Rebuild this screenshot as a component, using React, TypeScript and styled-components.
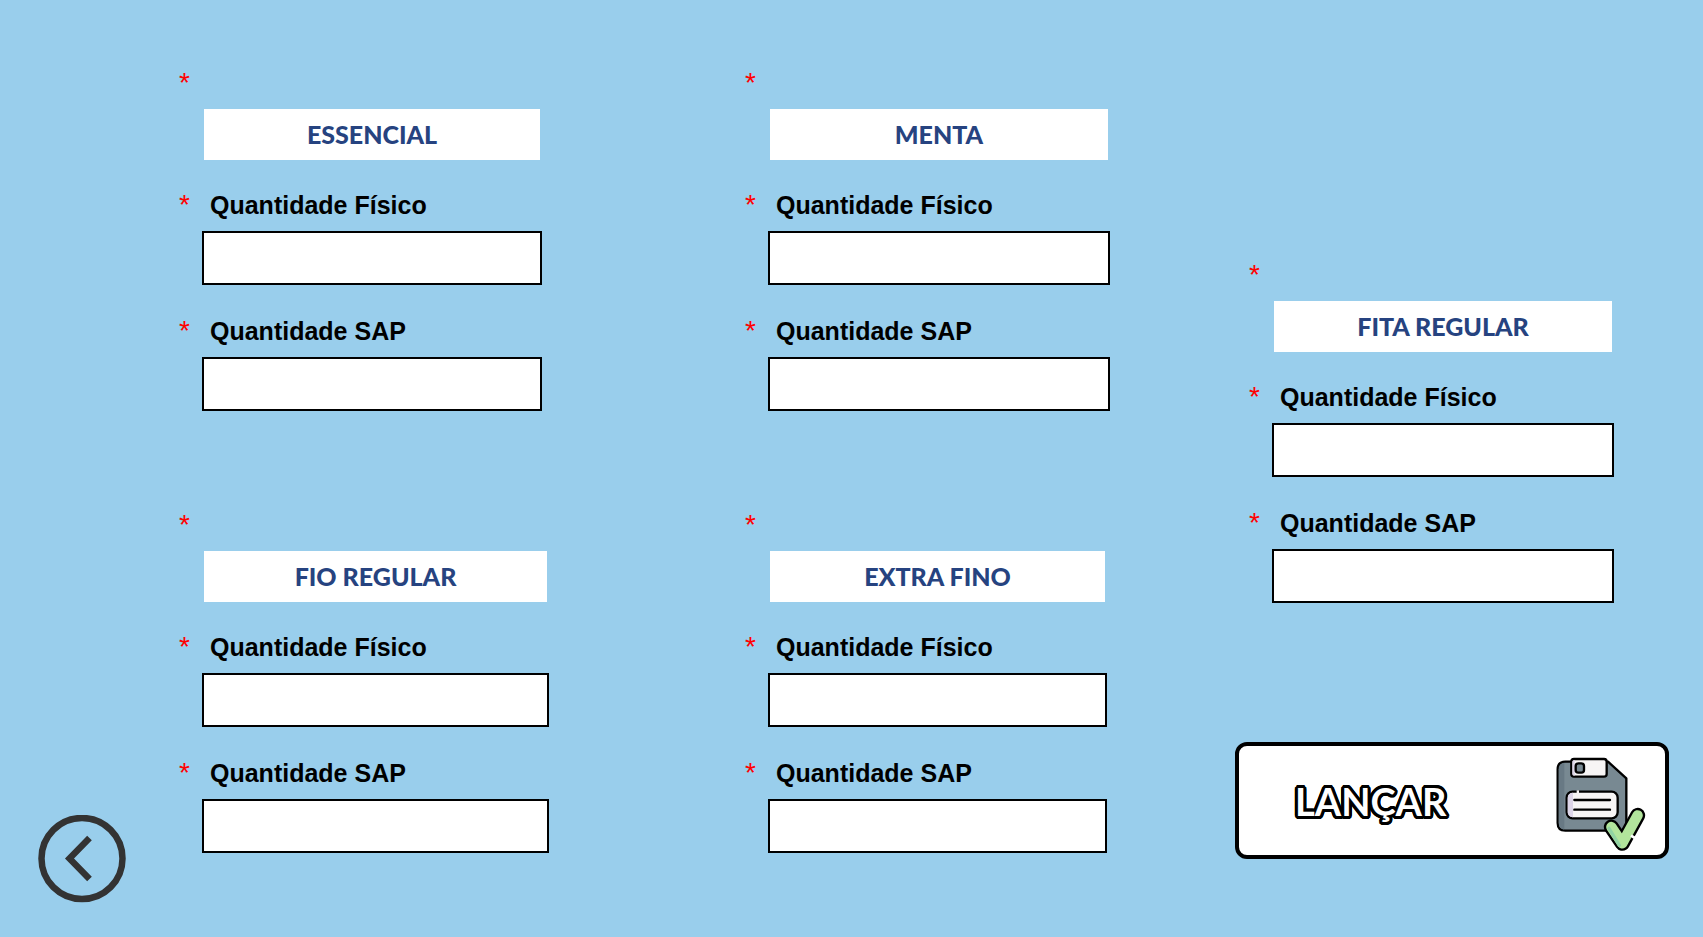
import React, { useId } from "react";
import styled, { createGlobalStyle } from "styled-components";

const GlobalStyle = createGlobalStyle`
  *, *::before, *::after { box-sizing: border-box; }
  body {
    margin: 0;
    background: #99ceec;
    color: #000;
    font-family: "Liberation Sans", Arial, sans-serif;
  }
`;

const Page = styled.div`
  display: flex;
  min-height: 100vh;
`;

const Side = styled.nav`
  display: flex;
  flex: 0 0 179px;
  align-items: flex-end;
  padding: 0 0 34px 38px;
`;

const BackButton = styled.button`
  display: block;
  width: 88px;
  height: 88px;
  padding: 0;
  border: 0;
  border-radius: 50%;
  background: none;
  cursor: pointer;

  svg { display: block; }
`;

const Form = styled.form`
  display: grid;
  flex: 1;
  min-width: 0;
  grid-template-columns: minmax(0, 566fr) minmax(0, 490fr) minmax(0, 434fr);
  align-items: start;
  padding: 67px 34px 67px 0;
`;

const Column = styled.div<{ $top?: number; $gap: number }>`
  display: flex;
  flex-direction: column;
  gap: ${(p) => p.$gap}px;
  padding-top: ${(p) => p.$top ?? 0}px;
`;

const Card = styled.section<{ $left?: number; $right: number }>`
  display: flex;
  flex-direction: column;
  gap: 30px;
  padding-left: ${(p) => p.$left ?? 0}px;
  padding-right: ${(p) => p.$right}px;
`;

const Block = styled.div`
  display: flex;
  flex-direction: column;
  gap: 12px;
`;

const LabelRow = styled.div`
  display: flex;
  height: 30px;
`;

const Star = styled.span`
  flex: 0 0 31px;
  color: #ff0000;
  font-size: 28px;
  line-height: 32px;
`;

const Label = styled.label`
  font-size: 25px;
  font-weight: 700;
  line-height: 32px;
  white-space: nowrap;
`;

const Title = styled.h2`
  margin: 0 2px 0 25px;
  background: #fff;
  color: #264380;
  font-family: Lato, sans-serif;
  font-size: 25px;
  font-weight: 900;
  line-height: 51px;
  margin-bottom: -1px;
  text-align: center;
`;

const Input = styled.input`
  height: 54px;
  min-width: 0;
  margin-left: 23px;
  padding: 0 12px;
  border: 2px solid #000;
  border-radius: 0;
  background: #fff;
  font: inherit;
  font-size: 25px;
`;

const SubmitButton = styled.button`
  display: flex;
  align-items: center;
  justify-content: space-between;
  height: 117px;
  padding: 0 19px 0 56px;
  border: 4px solid #000;
  border-radius: 12px;
  background: #fff;
  cursor: pointer;
`;

/* Round outline: black copies of the text placed on a 3px circle around it. */
const outline = Array.from({ length: 24 }, (_, i) => {
  const a = (i * Math.PI) / 12;
  return `${(3 * Math.cos(a)).toFixed(2)}px ${(3 * Math.sin(a)).toFixed(2)}px 0 #000`;
}).join(", ");

const SubmitText = styled.span`
  color: #fff;
  font-family: Lato, sans-serif;
  font-size: 38px;
  font-weight: 700;
  line-height: 48px;
  text-shadow: ${outline};
`;

function Field({ label }: { label: string }) {
  const id = useId();
  return (
    <Block>
      <LabelRow>
        <Star aria-hidden="true">*</Star>
        <Label htmlFor={id}>{label}</Label>
      </LabelRow>
      <Input id={id} type="text" inputMode="numeric" required />
    </Block>
  );
}

function Product({ name, left, right }: { name: string; left?: number; right: number }) {
  return (
    <Card $left={left} $right={right}>
      <Block>
        <LabelRow>
          <Star aria-hidden="true">*</Star>
        </LabelRow>
        <Title>{name}</Title>
      </Block>
      <Field label="Quantidade Físico" />
      <Field label="Quantidade SAP" />
    </Card>
  );
}

function SaveIcon() {
  return (
    <svg width="90" height="103" viewBox="230 54 270 309" fill="none" stroke="#000" strokeWidth="7" strokeLinecap="round" strokeLinejoin="round" aria-hidden="true">
      <path d="M258 92H386L441 142V276Q441 299 418 299H258Q235 299 235 276V115Q235 92 258 92Z" fill="#788992" />
      <path d="M255 95Q238 97 238 115V276Q238 294 255 296Z" fill="#687984" stroke="none" />
      <rect x="276" y="84" width="106" height="53" rx="8" fill="#f7f5f5" />
      <path d="M279 92Q279 87 286 87V134Q279 134 279 129Z" fill="#ddd5e8" stroke="none" />
      <rect x="289" y="97" width="25" height="28" rx="8" fill="#788992" />
      <rect x="262" y="182" width="153" height="80" rx="18" fill="#f7f5f5" />
      <path d="M281 185Q265 186 265 200V244Q265 258 281 259Z" fill="#ddd5e8" stroke="none" />
      <path d="M285 207H392M285 236H392" />
      <path d="M292 182H299" stroke="#f7f5f5" strokeWidth="8" strokeLinecap="butt" />
      <path d="M396 288L429 337L475 253" stroke="#000" strokeWidth="45" />
      <path d="M396 288L429 337L475 253" stroke="#b2e59c" strokeWidth="31" />
      <path d="M389 292L420 343" stroke="#91d3a3" strokeWidth="10" />
      <path d="M455 314L467 321" stroke="#fff" strokeWidth="8" strokeLinecap="butt" />
    </svg>
  );
}

export default function App() {
  return (
    <>
      <GlobalStyle />
      <Page>
        <Side>
          <BackButton type="button" aria-label="Voltar">
            <svg width="88" height="88" viewBox="0 0 88 88" fill="none" stroke="#333" aria-hidden="true">
              <circle cx="44" cy="43.500" r="40.5" strokeWidth="6.5" />
              <path d="M51.500 23L31.500 43.500L51.500 64" strokeWidth="6.500" />
            </svg>
          </BackButton>
        </Side>
        <Form onSubmit={(e) => e.preventDefault()}>
          <Column $gap={98}>
            <Product name="ESSENCIAL" right={203} />
            <Product name="FIO REGULAR" right={196} />
          </Column>
          <Column $gap={98}>
            <Product name="MENTA" right={125} />
            <Product name="EXTRA FINO" right={128} />
          </Column>
          <Column $top={192} $gap={139}>
            <Product name="FITA REGULAR" left={14} right={55} />
            <SubmitButton type="submit">
              <SubmitText>LANÇAR</SubmitText>
              <SaveIcon />
            </SubmitButton>
          </Column>
        </Form>
      </Page>
    </>
  );
}
